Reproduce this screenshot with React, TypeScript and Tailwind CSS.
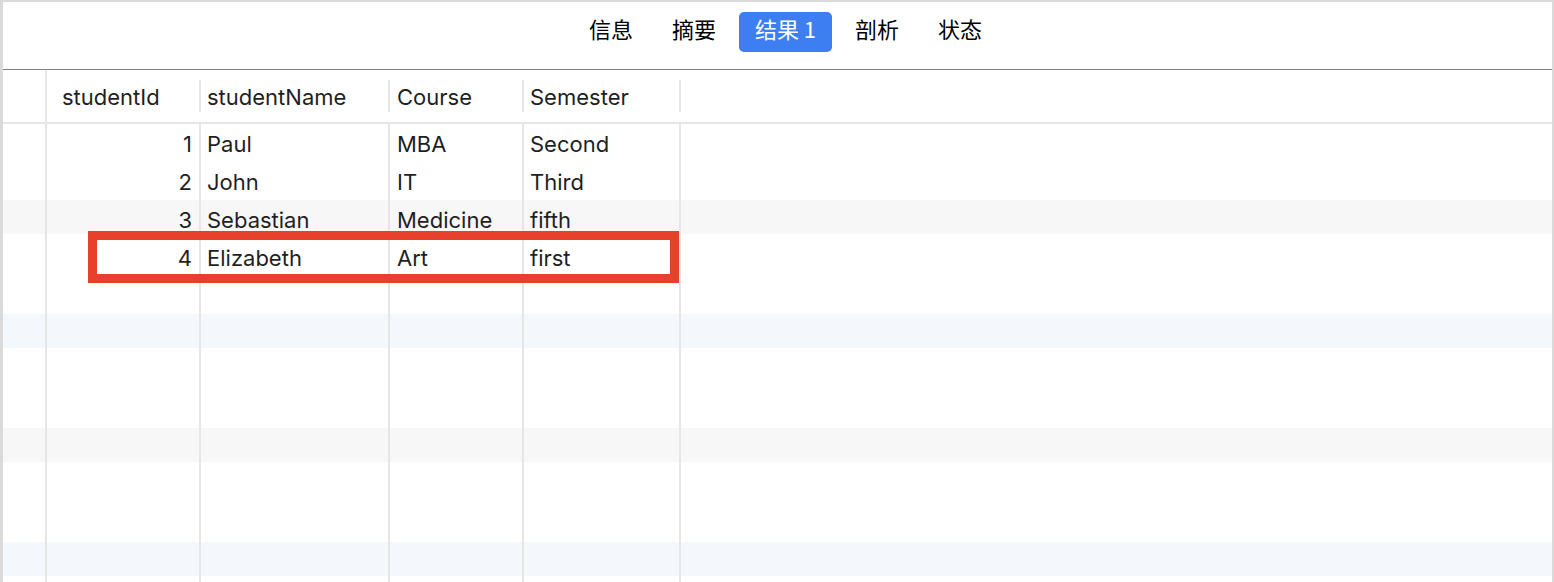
import React from 'react';

interface Student {
  studentId: number;
  studentName: string;
  course: string;
  semester: string;
}

const students: Student[] = [
  { studentId: 1, studentName: 'Paul', course: 'MBA', semester: 'Second' },
  { studentId: 2, studentName: 'John', course: 'IT', semester: 'Third' },
  { studentId: 3, studentName: 'Sebastian', course: 'Medicine', semester: 'fifth' },
  { studentId: 4, studentName: 'Elizabeth', course: 'Art', semester: 'first' },
];

const tabs = ['信息', '摘要', '结果 1', '剖析', '状态'];

// stripe colours repeat every 3 rows: gray, then blue
const stripeFor = (i: number) => {
  if (i % 3 !== 2) return '';
  return Math.floor(i / 3) % 2 === 0
    ? 'bg-[linear-gradient(to_bottom,#f7f7f7_34px,transparent_34px)]'
    : 'bg-[linear-gradient(to_bottom,#f4f8fd_34px,transparent_34px)]';
};

const HeaderCell: React.FC<{ label: string; width: string; pad: string }> = ({ label, width, pad }) => (
  <div className={`flex items-center ${width}`}>
    <span className={`flex-1 pt-[3px] ${pad}`}>{label}</span>
    <div className="h-[32px] w-[2px] bg-[#e6e6e6]" />
  </div>
);

const App: React.FC = () => {
  const rows = Array.from({ length: 13 }, (_, i) => students[i]);

  return (
    <div
      className="relative h-[582px] w-full overflow-hidden border-t-2 border-r-2 border-l-[3px] border-[#dadada] bg-white text-[22px] text-[#1f1f1f]"
      style={{ fontFamily: 'Inter, "Noto Sans CJK SC", sans-serif' }}
    >
      {/* tab bar */}
      <div className="flex h-[68px] items-start justify-center gap-[7px] border-b border-[#808080] pl-[16px] pt-[10px]">
        {tabs.map(tab => (
          <div
            key={tab}
            className={`flex h-[40px] items-center rounded-[5px] px-[16px] pb-[7px] text-[22px] font-normal ${
              tab === '结果 1' ? 'bg-[#3d7ef3] text-white' : 'text-black'
            }`}
            style={{ fontFamily: '"Noto Sans CJK SC", Inter, sans-serif' }}
          >
            {tab}
          </div>
        ))}
      </div>

      {/* column header */}
      <div className="flex h-[54px] border-b-2 border-[#e6e6e6]">
        <div className="w-[44px] border-r-2 border-[#e6e6e6]" />
        <HeaderCell label="studentId" width="w-[154px]" pad="pl-[15px]" />
        <HeaderCell label="studentName" width="w-[189px]" pad="pl-[6px]" />
        <HeaderCell label="Course" width="w-[134px]" pad="pl-[7px]" />
        <HeaderCell label="Semester" width="w-[157px]" pad="pl-[6px]" />
      </div>

      {/* rows */}
      <div>
        {rows.map((s, i) => (
          <div key={i} className={`flex h-[38px] items-start ${stripeFor(i)}`}>
            <div className="h-full w-[44px] border-r-2 border-[#e6e6e6]" />
            <div className="h-full w-[154px] border-r-2 border-[#e6e6e6] pr-[7px] pt-[4px] text-right">
              {s?.studentId}
            </div>
            <div className="h-full w-[189px] border-r-2 border-[#e6e6e6] pl-[6px] pt-[4px]">{s?.studentName}</div>
            <div className="h-full w-[134px] border-r-2 border-[#e6e6e6] pl-[7px] pt-[4px]">{s?.course}</div>
            <div className="h-full w-[157px] border-r-2 border-[#e6e6e6] pl-[6px] pt-[4px]">{s?.semester}</div>
          </div>
        ))}
      </div>

      {/* highlight annotation */}
      <div className="absolute left-[85px] top-[229px] h-[52px] w-[591px] border-[9px] border-[#e8412b]" />
    </div>
  );
};

export default App;
